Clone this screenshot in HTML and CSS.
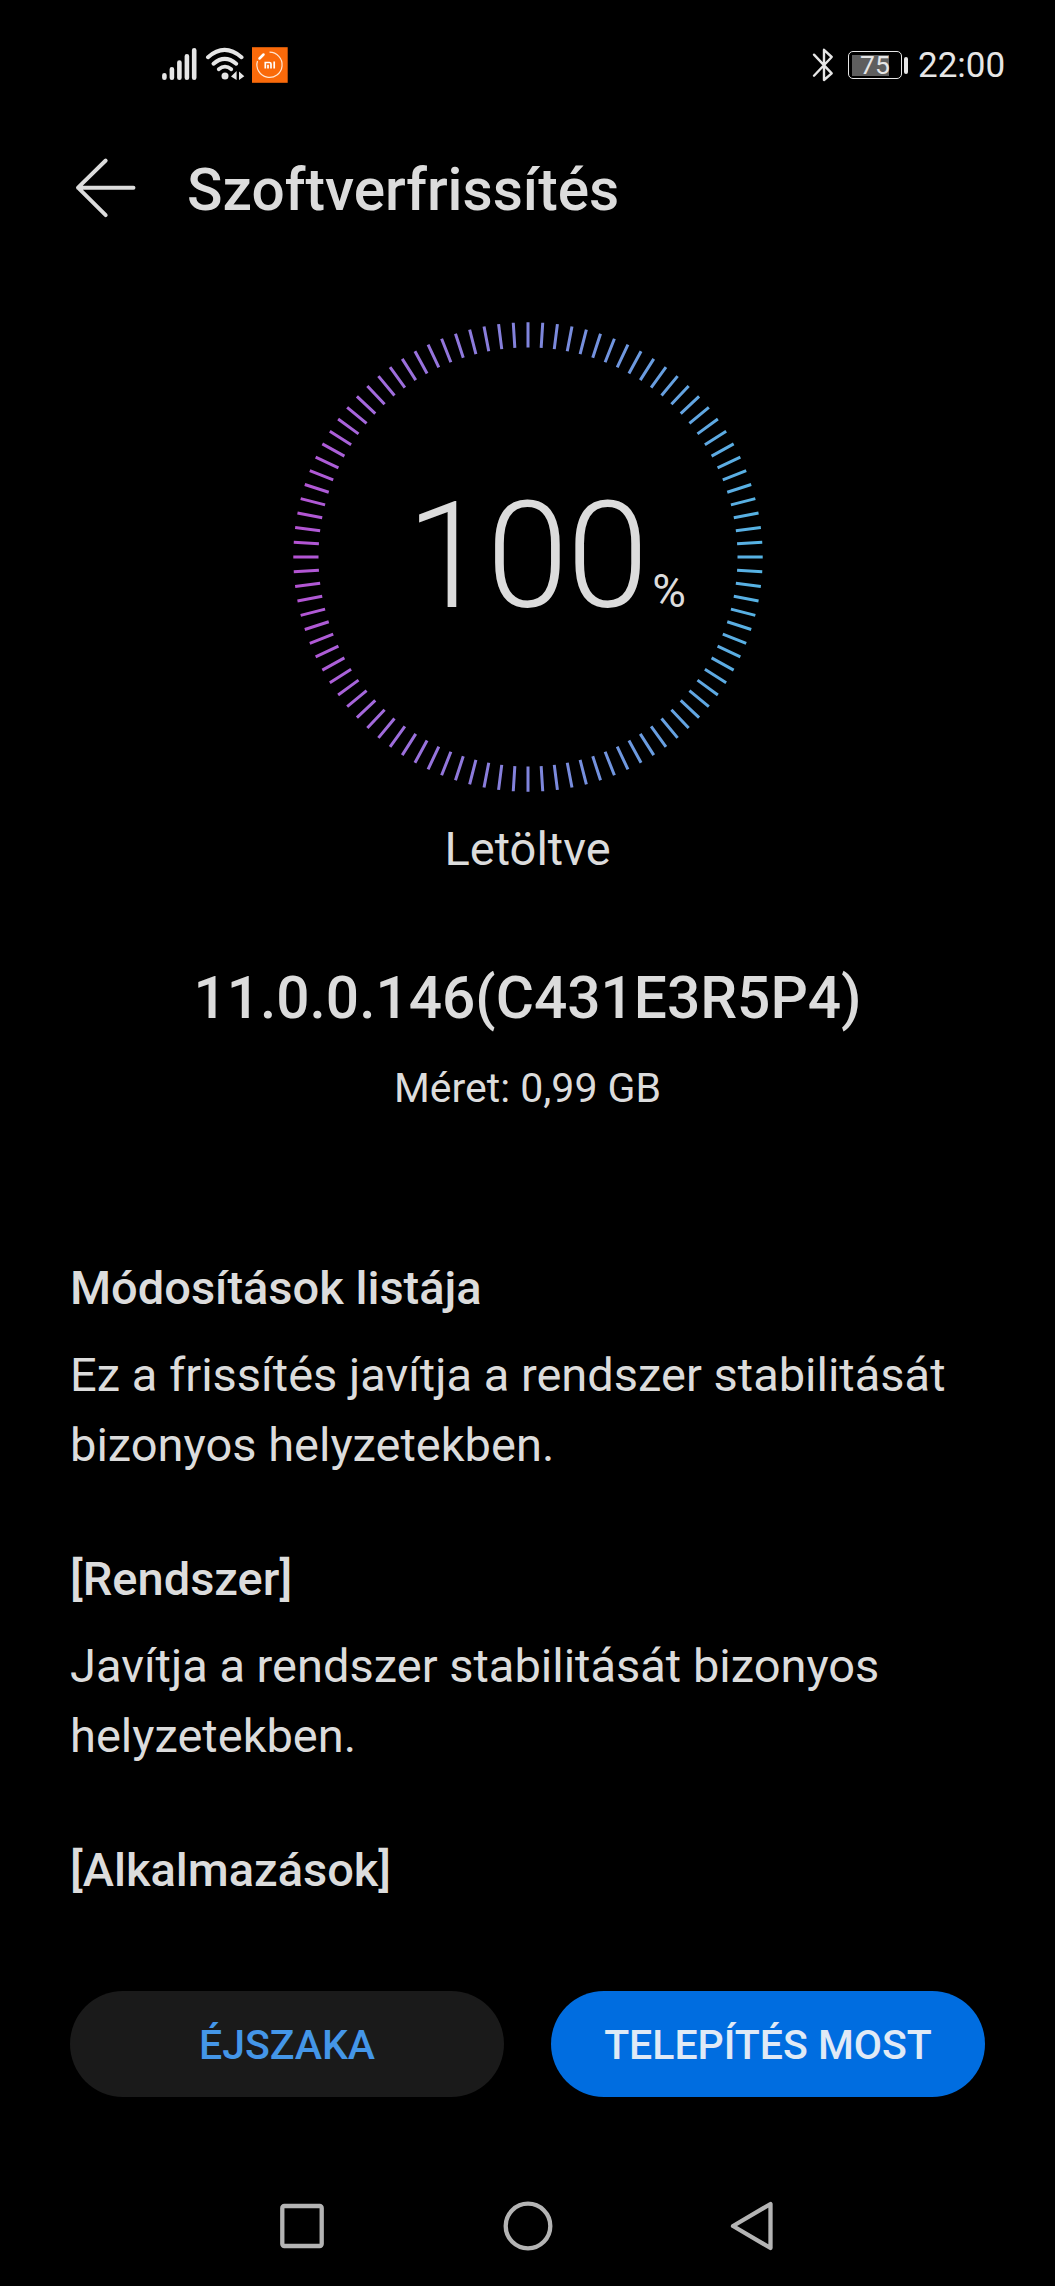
FILE: index.html
```html
<!DOCTYPE html>
<html lang="hu">
<head>
<meta charset="utf-8">
<title>Szoftverfrissítés</title>
<link rel="stylesheet" href="styles.css">
</head>
<body>
<div class="screen">
  <div class="status">
    <div class="status-left">
      <svg width="128" height="40" viewBox="160 45 128 40">
        <g stroke="#e6e6e6" stroke-width="4.6" stroke-linecap="round" fill="none">
          <path d="M164.4 75.3V77.700M171.900 69.300V77.700M179.400 62.500V77.700M186.900 56.200V77.700M194.200 50.200V77.700"/>
          <path d="M208 57.200Q224.500 42.600 241.500 57.200" stroke-width="4"/>
          <path d="M213.500 63.700Q224.700 54 236.200 63.700" stroke-width="4"/>
          <path d="M218.700 69.200Q225 64 231.300 69.200" stroke-width="3.700"/>
        </g>
        <circle cx="225" cy="76" r="3.500" fill="#e6e6e6"/>
        <path d="M236.600 71V80L231 76.500ZM239 71.500L244.300 76.200L239 80Z" fill="#e6e6e6"/>
        <rect x="252" y="47.200" width="35.700" height="35.600" fill="#fa6a0a"/>
        <g fill="none" stroke="#ffe6d2">
          <path d="M269.500 52.200A12.600 12.600 0 1 1 257.500 61" stroke-width="1.200"/>
          <path d="M259.500 58.500L263.500 54.500" stroke="#fff" stroke-width="2.500" stroke-linecap="round"/>
          <path d="M265.300 68.500V62.500H269.500Q271 62.500 271 64V68.500M268 64.800V68.500M274.200 61.600V68.500" stroke="#fff" stroke-width="1.700"/>
        </g>
      </svg>
    </div>
    <div class="status-right">
      <svg width="24" height="40" viewBox="811 45 24 40">
        <path d="M814 54.700L831.700 73.300L824 80V49.800L831.700 57L814 75.700" fill="none" stroke="#e6e6e6" stroke-width="2.400" stroke-linecap="round" stroke-linejoin="round"/>
      </svg>
      <div class="battery"><div class="battery-level"></div><span class="battery-text">75</span></div>
      <div class="battery-tip"></div>
      <span class="clock">22:00</span>
    </div>
  </div>

  <header class="header">
    <svg width="64" height="70" viewBox="74 155 64 70">
      <path d="M133.500 187.700H78M105.700 160.500L78 187.700L105.700 215.200" fill="none" stroke="#dcdcdc" stroke-width="3.900" stroke-linecap="round" stroke-linejoin="round"/>
    </svg>
    <h1>Szoftverfrissítés</h1>
  </header>

  <div class="ring">
    <svg width="474" height="474" viewBox="-237 -237 474 474">
      <defs>
        <linearGradient id="sweep" gradientUnits="userSpaceOnUse" x1="-235" y1="0" x2="235" y2="0">
          <stop offset="0" stop-color="#b552d2"/>
          <stop offset=".15" stop-color="#a568dc"/>
          <stop offset=".5" stop-color="#8084dc"/>
          <stop offset="1" stop-color="#55b4e4"/>
        </linearGradient>
      </defs>
      <path id="ticks" stroke="url(#sweep)" stroke-width="3" fill="none"/>
    </svg>
    <div class="value"><span class="number">100</span><span class="percent">%</span></div>
  </div>

  <p class="state">Letöltve</p>
  <h2 class="version">11.0.0.146(C431E3R5P4)</h2>
  <p class="size">Méret: 0,99 GB</p>

  <main class="changes">
    <section>
      <h3>Módosítások listája</h3>
      <p>Ez a frissítés javítja a rendszer stabilitását bizonyos helyzetekben.</p>
    </section>
    <section>
      <h3>[Rendszer]</h3>
      <p>Javítja a rendszer stabilitását bizonyos helyzetekben.</p>
    </section>
    <section>
      <h3>[Alkalmazások]</h3>
    </section>
  </main>

  <div class="actions">
    <button class="btn btn-night">ÉJSZAKA</button>
    <button class="btn btn-now">TELEPÍTÉS MOST</button>
  </div>

  <nav class="nav">
    <svg width="50" height="50" viewBox="0 0 50 50"><rect x="5.300" y="5" width="39.400" height="40" rx="2"/></svg>
    <svg width="50" height="50" viewBox="0 0 50 50"><circle cx="25" cy="25" r="22.300"/></svg>
    <svg width="50" height="50" viewBox="0 0 50 50"><path d="M5 25L42.500 3V47Z"/></svg>
  </nav>
</div>
<script src="ring.js"></script>
</body>
</html>
```
FILE: styles.css
```css
* { box-sizing: border-box; margin: 0; padding: 0; }
body { background: #000; color: #dcdcdc; font-family: Roboto, "Liberation Sans", sans-serif; }
svg { display: block; flex: none; }
.screen { width: 1055px; height: 2286px; overflow: hidden; display: flex; flex-direction: column; }

.status { height: 92px; padding: 45px 49px 0 160px; display: flex; justify-content: space-between; align-items: flex-start; color: #e6e6e6; }
.status-right { display: flex; align-items: center; height: 40px; }
.battery { display: grid; align-items: center; width: 54px; height: 28px; margin-left: 13px; border: 1.700px solid #e6e6e6; border-radius: 5px; }
.battery-level { grid-area: 1 / 1; width: 37px; height: 21px; margin-left: 3px; background: #5e5e5e; }
.battery-text { grid-area: 1 / 1; text-align: center; font-size: 26.500px; line-height: 24px; }
.battery-tip { width: 4px; height: 17px; margin-left: 2px; border-radius: 2px; background: #e6e6e6; }
.clock { width: 88px; margin-left: 10px; padding-top: 2px; font-size: 35px; line-height: 40px; white-space: nowrap; }

.header { display: flex; padding: 63px 0 0 74px; height: 133px; }
h1 { margin-left: 49px; font-size: 58.600px; line-height: 70px; font-weight: 500; white-space: nowrap; }

.ring { display: grid; justify-content: center; margin-top: 95px; }
.ring svg { grid-area: 1 / 1; }
.value { grid-area: 1 / 1; display: flex; align-items: baseline; justify-content: center; padding: 147px 0 0 37px; line-height: 180px; }
.number { font-size: 147.500px; font-weight: 300; letter-spacing: -1.500px; }
.percent { margin-left: 5px; font-size: 46px; }

.state { margin-top: 25px; text-align: center; font-size: 47px; line-height: 60px; }
.version { margin-top: 84px; text-align: center; font-size: 58.600px; line-height: 70px; font-weight: 500; }
.size { margin-top: 30px; text-align: center; font-size: 41px; line-height: 50px; }

.changes { display: flex; flex-direction: column; gap: 69px; margin-top: 145px; padding: 0 70px; }
h3 { font-size: 47px; line-height: 60px; font-weight: 500; }
.changes p { margin-top: 22px; font-size: 47px; line-height: 70px; }

.actions { display: grid; grid-template-columns: 1fr 1fr; gap: 47px; margin-top: 91px; padding: 0 70px; }
.btn { height: 106px; padding-top: 2px; border: 0; border-radius: 53px; font: 500 41px/50px Roboto, "Liberation Sans", sans-serif; white-space: nowrap; }
.btn-night { background: #1a1a1a; color: #4496e8; }
.btn-now { background: #006de0; color: #e0eaf6; }

.nav { display: flex; justify-content: space-between; margin-top: 104px; padding: 0 277px; }
.nav svg { fill: none; stroke: #b4b4b4; stroke-width: 4.300; stroke-linejoin: round; }
```
FILE: ring.js
```js
// One hundred radial ticks, one per percent.
const inner = 209.5, outer = 234.7;
let d = "";
for (let i = 0; i < 100; i++) {
  const a = i * Math.PI / 50, c = Math.cos(a), s = Math.sin(a);
  d += `M${inner * c} ${inner * s}L${outer * c} ${outer * s}`;
}
document.getElementById("ticks").setAttribute("d", d);
```
